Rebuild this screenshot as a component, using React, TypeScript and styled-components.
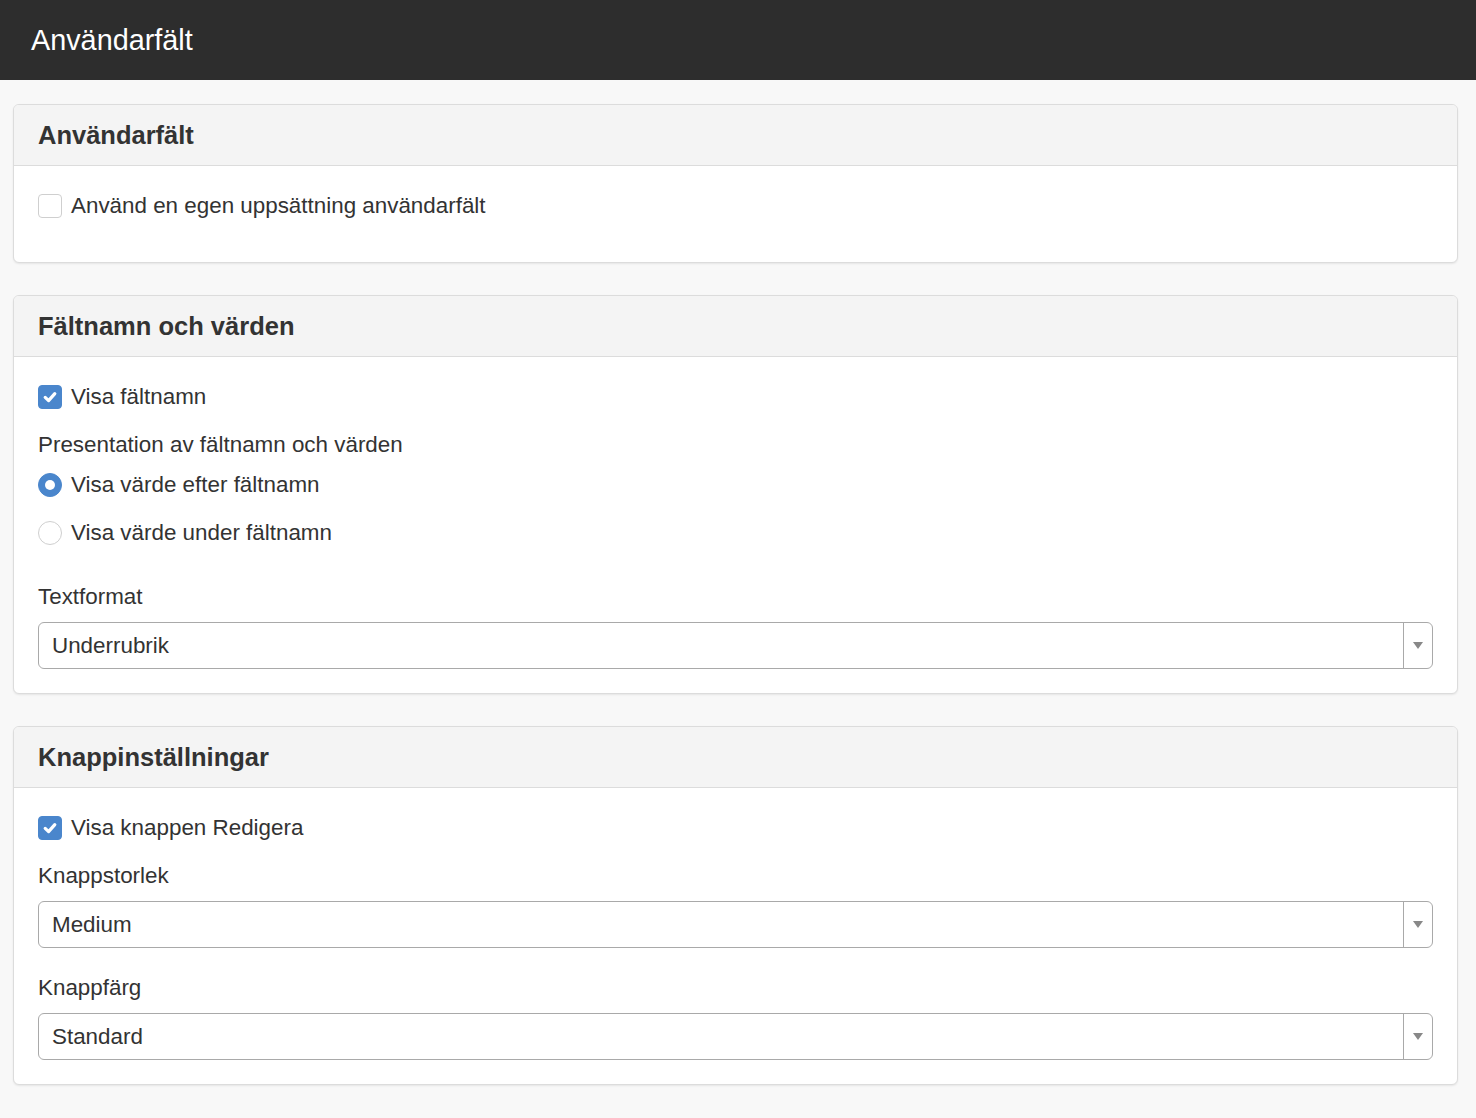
import React from 'react';
import styled, { createGlobalStyle } from 'styled-components';

const GlobalStyle = createGlobalStyle`
  html, body {
    margin: 0;
    padding: 0;
    background: #f8f8f8;
    font-family: "Liberation Sans", Arial, Helvetica, sans-serif;
    color: #333;
  }
  * { box-sizing: border-box; }
`;

const TopBar = styled.header`
  height: 80px;
  background-color: #2d2d2d;
  display: flex;
  align-items: center;
  padding-left: 31px;
`;

const TopTitle = styled.h1`
  margin: 0;
  font-size: 28.8px;
  font-weight: normal;
  color: #fff;
`;

const Content = styled.main`
  padding: 24px 18px 33px 13px;
  display: flex;
  flex-direction: column;
  gap: 32px;
`;

const Panel = styled.section`
  background: #fff;
  border: 1px solid #dcdcdc;
  border-radius: 6px;
  box-shadow: 0 1px 2px rgba(0, 0, 0, 0.08);
  overflow: hidden;
`;

const PanelHeader = styled.div`
  height: 61px;
  background: #f4f4f4;
  border-bottom: 1px solid #dcdcdc;
  display: flex;
  align-items: center;
  padding-left: 24px;
`;

const PanelTitle = styled.h2`
  margin: 0;
  font-size: 25.5px;
  font-weight: bold;
  color: #333;
`;

const PanelBody = styled.div<{ $bottom?: number }>`
  padding: 24px 24px ${(p) => p.$bottom ?? 24}px 24px;
  display: flex;
  flex-direction: column;
`;

const CheckRow = styled.label<{ $mt?: number; $mb?: number }>`
  display: flex;
  align-items: center;
  gap: 9px;
  height: 32px;
  font-size: 22.4px;
  margin-top: ${(p) => p.$mt ?? 0}px;
  margin-bottom: ${(p) => p.$mb ?? 0}px;
`;

const Box = styled.span<{ $checked?: boolean }>`
  width: 24px;
  height: 24px;
  border-radius: 4px;
  border: 1px solid ${(p) => (p.$checked ? '#4a86cc' : '#cfcfcf')};
  background: ${(p) => (p.$checked ? '#4a86cc' : '#fff')};
  display: flex;
  align-items: center;
  justify-content: center;
  flex-shrink: 0;
`;

const Radio = styled.span<{ $checked?: boolean }>`
  width: 24px;
  height: 24px;
  border-radius: 50%;
  border: 1px solid ${(p) => (p.$checked ? '#4a86cc' : '#cfcfcf')};
  background: ${(p) => (p.$checked ? '#4a86cc' : '#fff')};
  display: flex;
  align-items: center;
  justify-content: center;
  flex-shrink: 0;

  &::after {
    content: '';
    width: 10px;
    height: 10px;
    border-radius: 50%;
    background: #fff;
    display: ${(p) => (p.$checked ? 'block' : 'none')};
  }
`;

const FieldLabel = styled.div<{ $mt?: number }>`
  font-size: 22.4px;
  height: 32px;
  display: flex;
  align-items: center;
  margin-top: ${(p) => p.$mt ?? 0}px;
`;

const Select = styled.div<{ $mt?: number }>`
  height: 47px;
  margin-top: ${(p) => p.$mt ?? 0}px;
  border: 1px solid #a9a9a9;
  border-radius: 6px;
  display: flex;
  align-items: stretch;
  font-size: 22.4px;
  background: #fff;
`;

const SelectValue = styled.div`
  flex: 1;
  display: flex;
  align-items: center;
  padding-left: 13px;
`;

const SelectArrow = styled.div`
  width: 29px;
  border-left: 1px solid #a9a9a9;
  display: flex;
  align-items: center;
  justify-content: center;

  &::after {
    content: '';
    border-left: 5px solid transparent;
    border-right: 5px solid transparent;
    border-top: 7px solid #888;
  }
`;

// white check mark inside a ticked box
const Tick = () => (
  <svg width="16" height="16" viewBox="0 0 16 16">
    <path d="M3.2 8.4 L6.6 11.6 L12.8 4.6" fill="none" stroke="#fff" strokeWidth="3.2" strokeLinecap="round" strokeLinejoin="round" />
  </svg>
);

const Dropdown: React.FC<{ value: string; mt?: number }> = ({ value, mt }) => (
  <Select $mt={mt}>
    <SelectValue>{value}</SelectValue>
    <SelectArrow />
  </Select>
);

const App: React.FC = () => {
  return (
    <>
      <GlobalStyle />
      <TopBar>
        <TopTitle>Användarfält</TopTitle>
      </TopBar>
      <Content>
        <Panel>
          <PanelHeader>
            <PanelTitle>Användarfält</PanelTitle>
          </PanelHeader>
          <PanelBody $bottom={40}>
            <CheckRow>
              <Box />
              Använd en egen uppsättning användarfält
            </CheckRow>
          </PanelBody>
        </Panel>

        <Panel>
          <PanelHeader>
            <PanelTitle>Fältnamn och värden</PanelTitle>
          </PanelHeader>
          <PanelBody>
            <CheckRow>
              <Box $checked>
                <Tick />
              </Box>
              Visa fältnamn
            </CheckRow>
            <FieldLabel $mt={16}>Presentation av fältnamn och värden</FieldLabel>
            <CheckRow $mt={8} $mb={16}>
              <Radio $checked />
              Visa värde efter fältnamn
            </CheckRow>
            <CheckRow>
              <Radio />
              Visa värde under fältnamn
            </CheckRow>
            <FieldLabel $mt={32}>Textformat</FieldLabel>
            <Dropdown value="Underrubrik" mt={9} />
          </PanelBody>
        </Panel>

        <Panel>
          <PanelHeader>
            <PanelTitle>Knappinställningar</PanelTitle>
          </PanelHeader>
          <PanelBody>
            <CheckRow>
              <Box $checked>
                <Tick />
              </Box>
              Visa knappen Redigera
            </CheckRow>
            <FieldLabel $mt={16}>Knappstorlek</FieldLabel>
            <Dropdown value="Medium" mt={9} />
            <FieldLabel $mt={24}>Knappfärg</FieldLabel>
            <Dropdown value="Standard" mt={9} />
          </PanelBody>
        </Panel>
      </Content>
    </>
  );
};

export default App;
